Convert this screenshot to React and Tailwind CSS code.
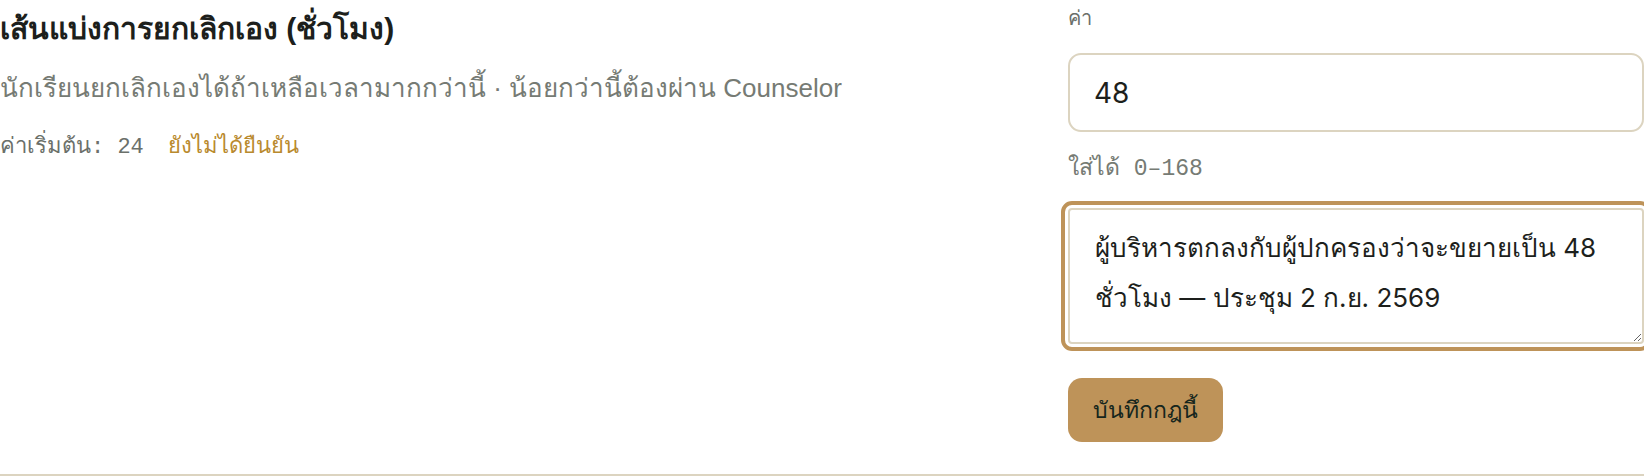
import { useState } from 'react';

const Setting = () => {
  const [value, setValue] = useState('48');
  const [note, setNote] = useState('ผู้บริหารตกลงกับผู้ปกครองว่าจะขยายเป็น 48 ชั่วโมง — ประชุม 2 ก.ย. 2569');

  return (
    <div className="w-[1644px] h-[476px] bg-white font-['Liberation_Sans',sans-serif] overflow-hidden">
      <div className="flex gap-10 border-b-2 border-[#dcd4c0] pb-[32px]">
        <div className="flex-1 min-w-0">
          <h2 className="mt-[11px] text-[30px] leading-[36px] font-semibold text-[#1d1f1c]">
            เส้นแบ่งการยกเลิกเอง (ชั่วโมง)
          </h2>
          <p className="mt-[24px] text-[26px] leading-[34px] text-[#767b74]">
            นักเรียนยกเลิกเองได้ถ้าเหลือเวลามากกว่านี้ · น้อยกว่านี้ต้องผ่าน Counselor
          </p>
          <div className="mt-[28px] flex gap-[24px] font-mono text-[22px] leading-[30px]">
            <span className="text-[#6b706a]">ค่าเริ่มต้น: 24</span>
            <span className="text-[#b98a2e]">ยังไม่ได้ยืนยัน</span>
          </div>
        </div>

        <div className="w-[576px] shrink-0 flex flex-col">
          <label className="mt-[6px] font-mono text-[20px] leading-[28px] text-[#6b706a]">ค่า</label>
          <input
            value={value}
            onChange={(e) => setValue(e.target.value)}
            className="mt-[19px] h-[79px] w-full rounded-[13px] border-2 border-[#dcd4c0] px-[24px] font-['Inter',sans-serif] text-[28px] text-[#1d1f1c] outline-none"
          />
          <div className="mt-[23px] font-mono text-[23px] leading-[28px] text-[#767b74]">ใส่ได้ 0–168</div>
          <textarea
            value={note}
            onChange={(e) => setNote(e.target.value)}
            className="mt-[25px] h-[136px] w-full rounded-[4px] border-2 border-[#dcd4c0] px-[25px] py-[13px] font-['Inter',sans-serif] text-[26px] leading-[50px] text-[#1d1f1c] outline-4 outline-offset-[3px] outline-[#be9359]"
          />
          <div className="mt-[34px]">
            <button className="h-[64px] px-[25px] rounded-[14px] bg-[#be9359] text-[23px] font-medium text-[#16261d]">
              บันทึกกฎนี้
            </button>
          </div>
        </div>
      </div>
    </div>
  );
};

export default function App() {
  return <Setting />;
}
